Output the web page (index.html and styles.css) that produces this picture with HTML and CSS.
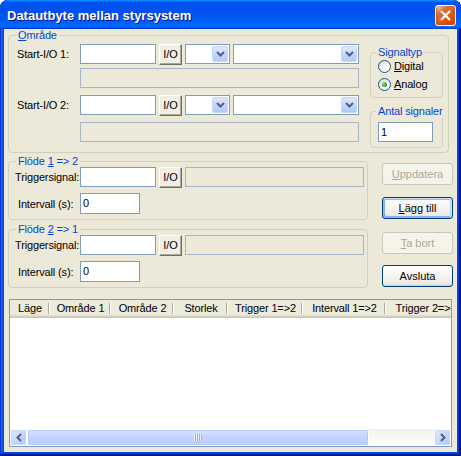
FILE: index.html
```html
<!DOCTYPE html>
<html lang="sv">
<head>
    <meta charset="UTF-8">
    <title>Datautbyte mellan styrsystem</title>
    <link rel="stylesheet" href="styles.css">
</head>
<body>
    <div class="window">
        <div class="titlebar">
            <span class="title">Datautbyte mellan styrsystem</span>
            <button class="close" aria-label="Stäng">
                <svg width="13" height="13" viewBox="0 0 13 13"><path d="M2 2L11 11M11 2L2 11" stroke="#fff" stroke-width="2.2"/></svg>
            </button>
        </div>

        <div class="client">
            <!-- Område -->
            <fieldset class="group area">
                <legend><u>O</u>mråde</legend>
                <div class="area-body">
                    <div class="area-left">
                        <div class="row">
                            <label class="lbl">Start-I/O 1:</label>
                            <input class="edit addr" type="text">
                            <button class="io">I/O</button>
                            <div class="combo type"><span class="drop"><svg width="9" height="6" viewBox="0 0 9 6"><path d="M1 1l3.5 3.5L8 1" fill="none" stroke="#4d6185" stroke-width="2"/></svg></span></div>
                            <div class="combo name"><span class="drop"><svg width="9" height="6" viewBox="0 0 9 6"><path d="M1 1l3.5 3.5L8 1" fill="none" stroke="#4d6185" stroke-width="2"/></svg></span></div>
                        </div>
                        <div class="info"></div>
                        <div class="row next">
                            <label class="lbl">Start-I/O 2:</label>
                            <input class="edit addr" type="text">
                            <button class="io">I/O</button>
                            <div class="combo type"><span class="drop"><svg width="9" height="6" viewBox="0 0 9 6"><path d="M1 1l3.5 3.5L8 1" fill="none" stroke="#4d6185" stroke-width="2"/></svg></span></div>
                            <div class="combo name"><span class="drop"><svg width="9" height="6" viewBox="0 0 9 6"><path d="M1 1l3.5 3.5L8 1" fill="none" stroke="#4d6185" stroke-width="2"/></svg></span></div>
                        </div>
                        <div class="info next"></div>
                    </div>

                    <div class="area-right">
                        <fieldset class="group signal">
                            <legend>Signaltyp</legend>
                            <div class="radios">
                                <div class="radio"><span class="dot"></span><span><u>D</u>igital</span></div>
                                <div class="radio checked"><span class="dot"></span><span><u>A</u>nalog</span></div>
                            </div>
                        </fieldset>
                        <fieldset class="group count">
                            <legend>Antal signaler</legend>
                            <input class="edit num" type="text" value="1">
                        </fieldset>
                    </div>
                </div>
            </fieldset>

            <!-- Flöden och knappar -->
            <div class="mid">
                <div class="flows">
                    <fieldset class="group flow">
                        <legend>Flöde <u>1</u> =&gt; 2</legend>
                        <div class="row trig">
                            <label class="lbl wide">Triggersignal:</label>
                            <input class="edit addr" type="text">
                            <button class="io">I/O</button>
                            <div class="info wide"></div>
                        </div>
                        <div class="row intv">
                            <label class="lbl wide indent">Intervall (s):</label>
                            <input class="edit secs" type="text" value="0">
                        </div>
                    </fieldset>
                    <fieldset class="group flow second">
                        <legend>Flöde <u>2</u> =&gt; 1</legend>
                        <div class="row trig">
                            <label class="lbl wide">Triggersignal:</label>
                            <input class="edit addr" type="text">
                            <button class="io">I/O</button>
                            <div class="info wide"></div>
                        </div>
                        <div class="row intv">
                            <label class="lbl wide indent">Intervall (s):</label>
                            <input class="edit secs" type="text" value="0">
                        </div>
                    </fieldset>
                </div>

                <div class="actions">
                    <button class="btn" disabled><u>U</u>ppdatera</button>
                    <button class="btn default"><u>L</u>ägg till</button>
                    <button class="btn" disabled><u>T</u>a bort</button>
                    <button class="btn">Avsluta</button>
                </div>
            </div>

            <!-- Lista -->
            <div class="list">
                <div class="list-head">
                    <span class="col">Läge</span>
                    <span class="col">Område 1</span>
                    <span class="col">Område 2</span>
                    <span class="col">Storlek</span>
                    <span class="col">Trigger 1=&gt;2</span>
                    <span class="col">Intervall 1=&gt;2</span>
                    <span class="col">Trigger 2=&gt;1</span>
                </div>
                <div class="list-body"></div>
                <div class="hscroll">
                    <span class="sb-btn"><svg width="6" height="9" viewBox="0 0 6 9"><path d="M5 1L1.5 4.5 5 8" fill="none" stroke="#4d6185" stroke-width="2"/></svg></span>
                    <span class="thumb"><span class="grip"></span></span>
                    <span class="track"></span>
                    <span class="sb-btn"><svg width="6" height="9" viewBox="0 0 6 9"><path d="M1 1l3.5 3.5L1 8" fill="none" stroke="#4d6185" stroke-width="2"/></svg></span>
                </div>
            </div>
        </div>
    </div>
</body>
</html>
```

FILE: styles.css
```css
* {
    box-sizing: border-box;
}

body {
    margin: 0;
    background: #fff;
    font-family: "Liberation Sans", Arial, sans-serif;
    font-size: 11px;
    color: #000;
}

/* Fönsterram */
.window {
    width: 461px;
    height: 456px;
    display: flex;
    flex-direction: column;
    background: #0054e3;
    border-radius: 8px 8px 0 0;
    box-shadow: inset -1px -1px #00138c, inset 1px 1px #0831d9,
                inset -2px -2px #001ea0, inset 2px 2px #166aee,
                inset -3px -3px #003bda, inset 3px 3px #0855dd;
    overflow: hidden;
}

.titlebar {
    flex: none;
    height: 29px;
    display: flex;
    align-items: center;
    justify-content: space-between;
    padding: 0 5px 0 7px;
    border-radius: 8px 8px 0 0;
    background: linear-gradient(180deg, #0997ff, #0053ee 8%, #0050ee 40%, #06f 88%, #06f 93%, #005bff 95%, #003dd7 96%, #003dd7);
}

.title {
    color: #fff;
    font: bold 13px "Liberation Sans", Arial, sans-serif;
    text-shadow: 1px 1px #0f1089;
    padding-top: 1px;
}

.close {
    width: 21px;
    height: 21px;
    margin-top: 2px;
    padding: 0;
    display: flex;
    align-items: center;
    justify-content: center;
    border: 1px solid #fff;
    border-radius: 3px;
    background: radial-gradient(circle at 90% 90%, #cc4600 0, #dc6527 55%, #cd7546 70%, #ffccb2 90%, #fff 100%);
    box-shadow: inset 0 -1px 2px 1px #da4600;
}

.client {
    flex: 1;
    min-height: 0;
    margin: 0 4px 4px;
    padding-left: 4px;
    background: #ece9d8;
    display: flex;
    flex-direction: column;
    letter-spacing: -0.15px;
}

/* Gruppramar */
.group {
    margin: 0;
    padding: 0;
    min-width: 0;
    border: 1px solid #d0d0bf;
    border-radius: 4px;
}

.group legend {
    margin-left: 7px;
    padding: 0 2px;
    line-height: 13px;
    white-space: nowrap;
    color: #0046d5;
}

.row {
    display: flex;
    align-items: center;
    height: 20px;
}

.lbl {
    width: 63px;
    white-space: nowrap;
}

.edit {
    height: 20px;
    margin: 0;
    padding: 0 2px 1px;
    border: 1px solid #7f9db9;
    background: #fff;
    font: inherit;
    outline: none;
}

.addr {
    width: 76px;
}

.io {
    width: 23px;
    height: 21px;
    margin: 0 3px;
    padding: 0;
    font: inherit;
    background: #f1efe5;
    border: 1px solid;
    border-color: #fff #716f64 #716f64 #fff;
    box-shadow: inset -1px -1px #aca899;
}

.combo {
    height: 20px;
    display: flex;
    justify-content: flex-end;
    padding: 1px;
    border: 1px solid #7f9db9;
    background: #fff;
}

.combo.type {
    width: 45px;
}

.combo.name {
    width: 126px;
    margin-left: 3px;
}

.drop {
    width: 16px;
    display: flex;
    align-items: center;
    justify-content: center;
    border: 1px solid #c6d6fc;
    border-radius: 2px;
    background: linear-gradient(180deg, #dde8fe, #c1d3fb 60%, #b4c8f6);
}

.info {
    width: 279px;
    height: 20px;
    margin: 4px 0 0 63px;
    border: 1px solid #a5b4c6;
    background: #ece9d8;
}

.info.next,
.row.next {
    margin-top: 7px;
}

/* Område */
.area {
    width: 441px;
}

.area-body {
    display: flex;
    align-items: flex-start;
    padding: 2px 0 4px 8px;
}

.area-left {
    width: 342px;
}

.area-right {
    width: 73px;
    margin: 2px 0 0 11px;
}

.signal legend,
.count legend {
    margin-left: 5px;
}

.radios {
    margin-top: -2px;
    padding: 0 0 4px 7px;
}

.radio {
    height: 18px;
    display: flex;
    align-items: center;
    gap: 3px;
}

.dot {
    width: 13px;
    height: 13px;
    display: flex;
    align-items: center;
    justify-content: center;
    border: 1px solid #1c5180;
    border-radius: 50%;
    background: linear-gradient(135deg, #dcdcd7, #fff 80%);
}

.checked .dot::after {
    content: "";
    width: 5px;
    height: 5px;
    border-radius: 50%;
    background: radial-gradient(circle at 35% 35%, #8ae88a, #21a121 70%);
}

.count {
    margin-top: 7px;
    padding-bottom: 5px;
}

.num {
    width: 55px;
    margin: 4px 0 0 7px;
}

/* Flöden */
.mid {
    display: flex;
    margin-top: 2px;
}

.flows {
    width: 360px;
}

.flow {
    width: 360px;
    padding-bottom: 5px;
}

.flow.second {
    margin-top: 3px;
}

.flow .trig {
    margin-top: -1px;
}

.flow .intv {
    height: 21px;
    margin-top: 6px;
}

.lbl.wide {
    width: 71px;
    padding-left: 6px;
}

.lbl.indent {
    padding-left: 9px;
}

.secs {
    width: 60px;
    height: 21px;
}

.info.wide {
    width: 179px;
    margin: 0;
}

.actions {
    width: 71px;
    margin-left: 14px;
    display: flex;
    flex-direction: column;
}

.btn {
    height: 22px;
    padding: 0;
    font: inherit;
    color: #000;
    border: 1px solid #003c74;
    border-radius: 3px;
    background: linear-gradient(180deg, #fff, #ecebe6 86%, #d6d0c5);
}

.btn:nth-child(1) { margin-top: 8px; }
.btn:nth-child(2) { margin-top: 12px; }
.btn:nth-child(3) { margin-top: 13px; }
.btn:nth-child(4) { margin-top: 11px; }

.btn:disabled {
    color: #aca899;
    border-color: #c9c7ba;
    background: #f5f4ea;
}

.btn.default {
    box-shadow: inset -1px 1px #cee7ff, inset 1px 2px #98b8ea, inset -2px 2px #bcd4f6, inset 1px -1px #89ade4, inset 2px -2px #89ade4;
}

/* Lista */
.list {
    flex: none;
    width: 443px;
    height: 148px;
    margin: 11px 0 0 1px;
    display: flex;
    flex-direction: column;
    border: 1px solid #7f9db9;
    background: #fff;
    overflow: hidden;
}

.list-head {
    flex: none;
    height: 18px;
    display: flex;
    background: #ebeadb;
    box-shadow: inset 0 -1px #cbc7b8, inset 0 -2px #d6d2c2, inset 0 -3px #e2decd;
}

.col {
    flex: none;
    padding-bottom: 2px;
    display: flex;
    align-items: center;
    justify-content: center;
    white-space: nowrap;
    overflow: hidden;
    background: linear-gradient(#aca899, #aca899) right 1px top 3px / 1px 11px no-repeat,
                linear-gradient(#fff, #fff) right 0 top 3px / 1px 11px no-repeat;
}

.col:nth-child(1) { width: 40px; }
.col:nth-child(2) { width: 61px; }
.col:nth-child(3) { width: 63px; }
.col:nth-child(4) { width: 54px; }
.col:nth-child(5) { width: 75px; }
.col:nth-child(6) { width: 83px; }
.col:nth-child(7) { width: 80px; background: none; }

.list-body {
    flex: 1;
}

.hscroll {
    flex: none;
    height: 17px;
    display: flex;
    background: linear-gradient(180deg, #f3f1ec, #fefefb);
}

.sb-btn {
    width: 17px;
    display: flex;
    align-items: center;
    justify-content: center;
    border: 1px solid #fff;
    border-radius: 2px;
    background: linear-gradient(135deg, #e4ecfe, #c1d3fb 60%, #b4c8f6);
    box-shadow: inset 0 0 0 1px #c6d6fc;
}

.thumb {
    width: 342px;
    display: flex;
    align-items: center;
    justify-content: center;
    border: 1px solid #fff;
    border-radius: 2px;
    background: linear-gradient(180deg, #d6e2fd, #c3d3fd 50%, #bacdfb);
    box-shadow: inset 0 0 0 1px #b8cbf7;
}

.grip {
    width: 8px;
    height: 7px;
    background: repeating-linear-gradient(90deg, #eef4fe 0 1px, #8cb0f8 1px 2px);
}

.track {
    flex: 1;
}
```
